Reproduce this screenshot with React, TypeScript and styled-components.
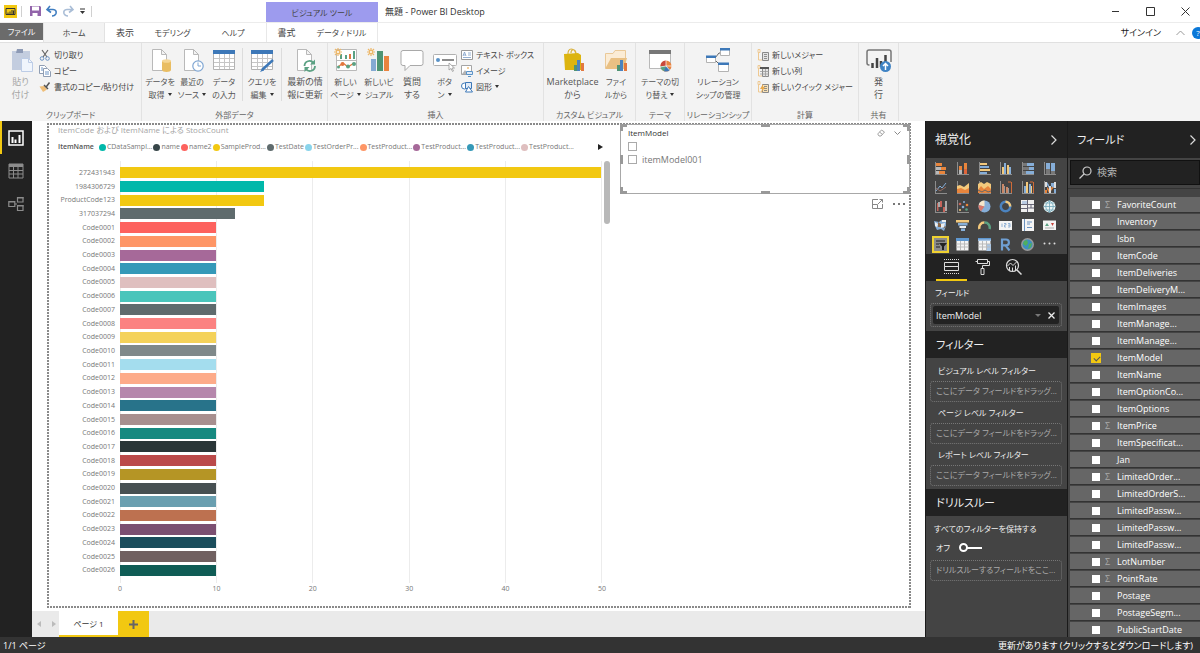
import React from "react";
import styled, { createGlobalStyle, css } from "styled-components";

const GlobalStyle = createGlobalStyle`
  * { box-sizing: border-box; }
  body {
    margin: 0;
    background: #fff;
    color: #444;
    font-family: "Open Sans", "Noto Sans CJK JP", sans-serif;
    font-size: 9px;
    line-height: 13px;
    font-feature-settings: "palt";
  }
  button, input {
    font: inherit;
    font-feature-settings: inherit;
    color: inherit;
    border: 0;
    padding: 0;
    margin: 0;
    background: none;
  }
  svg { display: block; flex: none; }
`;

const Shell = styled.div`
  display: flex;
  flex-direction: column;
  height: 100vh;
  overflow: hidden;
`;

/* ---------- title bar ---------- */
const TitleBar = styled.header`
  display: flex;
  align-items: center;
  flex: none;
  height: 23px;
  padding-left: 4px;
  border-bottom: 1px solid #ececec;
  white-space: nowrap;
`;
const QuickAccess = styled.div`
  display: flex;
  align-items: center;
  gap: 4px;
  width: 262px;
`;
const QuickButton = styled.button`
  display: flex;
`;
const Divider = styled.span`
  width: 1px;
  height: 11px;
  background: #d0d0d0;
`;
const ContextTab = styled.div`
  align-self: stretch;
  width: 112px;
  margin-top: 2px;
  background: #9d9bee;
  text-align: center;
  font-size: 8px;
  line-height: 22px;
`;
const AppTitle = styled.h1`
  flex: 1;
  margin: 0 0 0 7px;
  font-size: 9px;
  font-weight: 400;
  color: #333;
`;
const WindowButtons = styled.div`
  display: flex;
  gap: 5px;
`;
const WindowButton = styled.button`
  display: flex;
  justify-content: center;
  width: 30px;
`;

/* ---------- ribbon tabs ---------- */
const TabRow = styled.nav`
  display: flex;
  flex: none;
  height: 19px;
  white-space: nowrap;
`;
const RibbonTab = styled.button<{ $w: number; $kana?: boolean; $kind?: "file" | "active" }>`
  width: ${(p) => p.$w}px;
  font-size: ${(p) => (p.$kana ? 8 : 9)}px;
  line-height: 18px;
  ${(p) =>
    p.$kind === "file" &&
    css`
      height: 17px;
      background: #6b6b6b;
      color: #fff;
      line-height: 17px;
    `}
  ${(p) =>
    p.$kind === "active" &&
    css`
      background: #f3f3f3;
      border-left: 1px solid #e2e2e2;
      border-right: 1px solid #e2e2e2;
    `}
`;
const ContextTabs = styled.div`
  display: flex;
  width: 112px;
  border-left: 1px solid #e8e8e8;
  border-right: 1px solid #e8e8e8;
`;
const Account = styled.div`
  display: flex;
  align-items: center;
  gap: 15px;
  margin-left: auto;
  margin-right: -4px;
  color: #222;
`;
const HelpBadge = styled.button`
  width: 12px;
  height: 12px;
  margin-left: -8px;
  border-radius: 50%;
  background: #0b78d8;
  color: #fff;
  font-size: 8px;
  line-height: 12px;
`;

/* ---------- ribbon ---------- */
const Ribbon = styled.section`
  display: flex;
  flex: none;
  height: 79px;
  background: #f3f3f3;
  border-top: 1px solid #e0e0e0;
  white-space: nowrap;
`;
const Group = styled.div<{ $w: number }>`
  display: flex;
  flex-direction: column;
  justify-content: space-between;
  flex: none;
  width: ${(p) => p.$w}px;
  padding-top: 5px;
  border-right: 1px solid #e2e2e2;
`;
const GroupBody = styled.div<{ $pad?: number }>`
  display: flex;
  justify-content: ${(p) => (p.$pad === undefined ? "center" : "flex-start")};
  padding-left: ${(p) => p.$pad || 0}px;
`;
const GroupLabel = styled.div`
  display: flex;
  justify-content: center;
  color: #666;
  font-size: 8px;
`;
const BigButton = styled.button<{ $w: number; $off?: boolean; $kana?: boolean }>`
  display: flex;
  flex-direction: column;
  align-items: center;
  gap: 3px;
  width: ${(p) => p.$w}px;
  font-size: ${(p) => (p.$kana ? 8 : 9)}px;
  color: ${(p) => (p.$off ? "#a6a6a6" : "#555")};
`;
const InnerRule = styled.span`
  width: 1px;
  margin: 0 2px;
  background: #dcdcdc;
`;
const SmallList = styled.div`
  display: flex;
  flex-direction: column;
  gap: 3px;
`;
const SmallButton = styled.button`
  display: flex;
  align-items: center;
  gap: 3px;
  height: 13px;
  font-size: 8px;
  color: #444;
`;
const Caret = styled.span`
  display: inline-block;
  margin-left: 3px;
  vertical-align: 2px;
  border: 2px solid transparent;
  border-top: 3px solid #333;
  border-bottom: 0;
`;

/* ---------- workspace ---------- */
const Workspace = styled.main`
  display: flex;
  flex: 1;
  min-height: 0;
`;
const ViewRail = styled.nav`
  display: flex;
  flex-direction: column;
  flex: none;
  width: 32px;
  background: #222;
`;
const ViewButton = styled.button<{ $on?: boolean }>`
  display: flex;
  align-items: center;
  justify-content: center;
  height: 33px;
  border-left: 2px solid ${(p) => (p.$on ? "#f2c811" : "transparent")};
  padding-right: 2px;
`;
const Center = styled.div`
  display: flex;
  flex-direction: column;
  flex: 1;
  min-width: 0;
  padding-top: 2px;
`;
const dots = (dir: string) => `repeating-linear-gradient(${dir}, #8a8a8a 0 2px, transparent 2px 3px)`;
const Page = styled.div`
  display: flex;
  flex: 1;
  min-height: 0;
  margin: 0 14px 3px 15px;
  padding: 1px 1px 2px 2px;
  background:
    ${dots("90deg")} top / 100% 2px no-repeat,
    ${dots("90deg")} bottom / 100% 2px no-repeat,
    ${dots("180deg")} left / 2px 100% no-repeat,
    ${dots("180deg")} right / 2px 100% no-repeat;
`;
const Chart = styled.section`
  display: flex;
  flex-direction: column;
  flex: 1;
  min-width: 0;
  padding: 0 10px 10px 9px;
  font-size: 7px;
  line-height: 12px;
  color: #777;
`;
const ChartTitle = styled.h2`
  margin: 0;
  font-size: 8px;
  font-weight: 400;
  line-height: 12px;
  color: #a5a5a5;
`;
const Legend = styled.div`
  display: flex;
  align-items: center;
  gap: 1px;
  margin: 5px 7px 8px 0;
  white-space: nowrap;
`;
const LegendTitle = styled.strong`
  margin-right: 4px;
  font-weight: 600;
  color: #555;
`;
const LegendItem = styled.span<{ $c: string }>`
  display: flex;
  align-items: center;
  gap: 1px;
  &::before {
    content: "";
    width: 7px;
    height: 7px;
    border-radius: 50%;
    background: ${(p) => p.$c};
  }
`;
const LegendNext = styled.button`
  margin-left: auto;
  border: 3px solid transparent;
  border-left: 5px solid #222;
  border-right: 0;
`;
const PlotArea = styled.div`
  display: grid;
  grid-template-columns: 57px 1fr 6px;
  grid-template-rows: 1fr 13px;
  flex: 1;
  min-height: 0;
`;
const Categories = styled.div`
  display: flex;
  flex-direction: column;
  padding: 5px 0 6px;
`;
const Category = styled.div`
  display: flex;
  align-items: center;
  justify-content: flex-end;
  flex: 1;
  min-height: 0;
`;
const GridLines = styled.div`
  grid-area: 1 / 2;
  display: flex;
  margin: 0 2px 0 5px;
  border-right: 1px solid #ececec;
`;
const GridCell = styled.div`
  flex: 1;
  border-left: 1px solid #ececec;
`;
const Bars = styled.div`
  grid-area: 1 / 2;
  display: flex;
  flex-direction: column;
  margin: 0 3px 0 5px;
  padding: 5px 0 6px;
`;
const BarSlot = styled.div`
  display: flex;
  align-items: center;
  flex: 1;
  min-height: 0;
`;
const Bar = styled.div<{ $c: string }>`
  height: 11px;
  background: ${(p) => p.$c};
`;
const Axis = styled.div`
  grid-column: 2;
  display: flex;
  justify-content: space-between;
  margin: 0 -3px 0 0;
`;
const Tick = styled.span`
  width: 10px;
  text-align: center;
`;
const ScrollThumb = styled.div`
  grid-area: 1 / 3;
  width: 6px;
  height: 63px;
  border-radius: 3px;
  background: #b8b8b8;
`;

/* ---------- slicer ---------- */
const SlicerColumn = styled.div`
  flex: none;
  width: 290px;
`;
const Slicer = styled.section`
  position: relative;
  height: 70px;
  padding: 2px 8px 2px 7px;
  border: 1px solid #a8a8a8;
  background: #fff;
`;
const Handle = styled.i<{ $x: "l" | "c" | "r"; $y: "t" | "m" | "b" }>`
  position: absolute;
  width: ${(p) => (p.$x === "c" ? 9 : p.$y === "m" ? 3 : 7)}px;
  height: ${(p) => (p.$y === "m" ? 9 : p.$x === "c" ? 3 : 7)}px;
  ${(p) => (p.$x === "l" ? "left: -1px;" : p.$x === "r" ? "right: -1px;" : "left: calc(50% - 4px);")}
  ${(p) => (p.$y === "t" ? "top: -1px;" : p.$y === "b" ? "bottom: -1px;" : "top: calc(50% - 4px);")}
  ${(p) =>
    p.$x !== "c" && p.$y !== "m"
      ? `border: 0 solid #999;
         border-${p.$x === "l" ? "left" : "right"}-width: 3px;
         border-${p.$y === "t" ? "top" : "bottom"}-width: 3px;`
      : "background: #999;"}
`;
const SlicerHead = styled.div`
  display: flex;
  align-items: center;
  gap: 9px;
  font-size: 8px;
  line-height: 12px;
  color: #333;
`;
const SlicerName = styled.span`
  flex: 1;
`;
const SlicerItem = styled.label`
  display: flex;
  align-items: center;
  gap: 5px;
  height: 13px;
  color: #777;
`;
const SlicerOptions = styled.div`
  padding-top: 1px;
`;
const OpenBox = styled.input`
  appearance: none;
  width: 9px;
  height: 9px;
  border: 1px solid #aaa;
`;
const SlicerTools = styled.div`
  display: flex;
  align-items: center;
  justify-content: flex-end;
  gap: 10px;
  padding: 5px 5px 0 0;
`;

/* ---------- page tabs ---------- */
const PageTabs = styled.nav`
  display: flex;
  flex: none;
  height: 26px;
  background: #eaeaea;
`;
const PageArrows = styled.div`
  display: flex;
  align-items: center;
  justify-content: space-between;
  width: 27px;
  padding: 0 3px 0 5px;
`;
const PageTab = styled.button`
  width: 59px;
  background: #fff;
  border-bottom: 2px solid #f2c811;
  font-size: 8px;
  color: #333;
`;
const AddPage = styled.button`
  display: flex;
  align-items: center;
  justify-content: center;
  width: 31px;
  background: #f2c811;
`;

/* ---------- right panes ---------- */
const Pane = styled.aside<{ $w: number }>`
  display: flex;
  flex-direction: column;
  flex: none;
  width: ${(p) => p.$w}px;
  border-left: 1px solid #1a1a1a;
  background: #444;
  color: #f0f0f0;
  white-space: nowrap;
  overflow: hidden;
`;
const PaneHead = styled.div<{ $end: number }>`
  display: flex;
  align-items: center;
  justify-content: space-between;
  flex: none;
  height: 37px;
  padding: 0 ${(p) => p.$end}px 0 9px;
  background: #222;
`;
const PaneTitle = styled.h2<{ $kana?: boolean }>`
  margin: 0;
  font-size: ${(p) => (p.$kana ? 11 : 12)}px;
  font-weight: 400;
  line-height: 18px;
`;
const VisualGrid = styled.div`
  display: grid;
  grid-template-columns: repeat(6, 1fr);
  grid-auto-rows: 18px;
  row-gap: 1px;
  flex: none;
  padding: 2px 7px 0 4px;
`;
const VisualButton = styled.button<{ $on?: boolean }>`
  display: flex;
  align-items: center;
  justify-content: center;
  width: 17px;
  height: 17px;
  justify-self: center;
  outline: ${(p) => (p.$on ? "2px solid #f0d232" : "none")};
  outline-offset: -2px;
`;
const FormatTabs = styled.div`
  display: flex;
  flex: none;
  height: 27px;
  padding-left: 10px;
  background: #222;
`;
const FormatTab = styled.button<{ $on?: boolean }>`
  display: flex;
  align-items: center;
  justify-content: center;
  width: 31px;
  border-bottom: 2px solid ${(p) => (p.$on ? "#f2c811" : "transparent")};
`;
const Well = styled.div`
  display: flex;
  flex-direction: column;
  gap: 4px;
  padding: 5px 5px 4px 4px;
`;
const WellLabel = styled.div<{ $indent?: number }>`
  padding-left: ${(p) => p.$indent || 5}px;
  font-size: 8px;
`;
const DropZone = styled.div`
  height: 21px;
  padding: 0 5px;
  border: 1px dotted #777;
  border-radius: 3px;
  font-size: 8px;
  line-height: 18px;
  color: #aaa;
`;
const FieldZone = styled.div`
  padding: 2px;
  border: 1px dotted #777;
  border-radius: 3px;
`;
const FieldChip = styled.div`
  display: flex;
  align-items: center;
  gap: 6px;
  height: 18px;
  padding: 0 3px;
  border-radius: 2px;
  background: #222;
`;
const ChipName = styled.span`
  flex: 1;
`;
const ChipCaret = styled.button`
  border: 3px solid transparent;
  border-top: 3px solid #777;
  border-bottom: 0;
`;
const SectionHead = styled.h3`
  flex: none;
  height: 27px;
  margin: 0;
  padding-left: 10px;
  background: #222;
  font-size: 11px;
  font-weight: 400;
  line-height: 28px;
`;
const FilterList = styled.div`
  display: flex;
  flex-direction: column;
  gap: 4px;
  padding: 6px 5px 3px 4px;
`;
const KeepFilters = styled.label`
  display: flex;
  align-items: center;
  gap: 9px;
  padding: 2px 6px;
  font-size: 8px;
`;
const Switch = styled.input`
  appearance: none;
  position: relative;
  width: 23px;
  height: 9px;
  background: linear-gradient(#fff, #fff) right center / 15px 2px no-repeat;
  &::before {
    content: "";
    display: block;
    box-sizing: border-box;
    width: 9px;
    height: 9px;
    border: 2px solid #fff;
    border-radius: 50%;
  }
`;
const SearchBox = styled.label`
  display: flex;
  align-items: center;
  gap: 5px;
  flex: none;
  height: 25px;
  margin: 2px 0 0 2px;
  padding-left: 8px;
  border: 1px solid #111;
  background: #222;
`;
const SearchInput = styled.input`
  flex: 1;
  min-width: 0;
  font-size: 10px;
  &::placeholder {
    color: #b5b5b5;
    opacity: 1;
  }
`;
const FieldList = styled.div`
  display: flex;
  flex-direction: column;
  gap: 2px;
  margin-top: 3px;
  padding: 8px 0 0 2px;
  border-top: 1px solid #333;
`;
const FieldRow = styled.label`
  display: flex;
  align-items: center;
  flex: none;
  height: 15px;
  padding-left: 21px;
  background: #666;
  box-shadow: 0 1px 0 #333;
  color: #fff;
`;
const FieldCheck = styled.input`
  appearance: none;
  width: 8px;
  height: 8px;
  margin: 0 1px;
  background: #fff;
  &:checked {
    width: 10px;
    height: 10px;
    margin: 0;
    background: #f2c811;
  }
  &:checked::before {
    content: "";
    display: block;
    width: 5px;
    height: 3px;
    margin: 3px 0 0 3px;
    border: solid #555;
    border-width: 0 0 1px 1px;
    transform: rotate(-45deg);
  }
`;
const Sigma = styled.span`
  width: 16px;
  padding-left: 4px;
  color: #aaa;
`;

const StatusBar = styled.footer`
  display: flex;
  justify-content: space-between;
  flex: none;
  height: 16px;
  padding-left: 3px;
  background: #333;
  color: #fff;
  line-height: 17px;
  white-space: nowrap;
`;
const UpdateLink = styled.a`
  width: 202px;
  color: inherit;
  text-decoration: none;
`;

/* ---------- icons ---------- */
type IconProps = { s?: number; w?: number; h?: number; children: React.ReactNode };
const Icon = ({ s = 24, w, h, children }: IconProps) => (
  <svg width={w || s} height={h || s} viewBox={`0 0 ${w || s} ${h || s}`} fill="none" aria-hidden="true">
    {children}
  </svg>
);
const Sheet = () => <path d="M4.500 1.500h9l5 5v16h-14zM13.500 1.500v5h5" fill="#fff" stroke="#b9b9b9" />;
const Spark = () => (
  <g stroke="#edb86a" strokeWidth="1.2">
    <path d="M4 0v8M0 4h8M1 1l6 6M7 1l-6 6" />
    <circle cx="4" cy="4" r="1.6" fill="#fff" />
  </g>
);

const PasteIcon = () => (
  <Icon>
    <path d="M3 3h18v19H3z" fill="#c3cddf" />
    <path d="M8 1h6v4H7z" fill="#8d9ab5" />
    <path d="M12.500 10.500h7l4 4v9h-11z" fill="#f0f5fc" stroke="#bccce6" />
    <path d="M19.500 10.500v4h4" stroke="#bccce6" />
  </Icon>
);
const CutIcon = () => (
  <Icon s={12}>
    <path d="M3 1l5 7M9 1L4 8" stroke="#666" strokeWidth="1.200" />
    <circle cx="3" cy="9.500" r="1.800" stroke="#6d94c4" />
    <circle cx="8.500" cy="9.500" r="1.800" stroke="#6d94c4" />
  </Icon>
);
const CopyIcon = () => (
  <Icon s={12}>
    <path d="M.5.5h5l2 2v6h-7z" fill="#fff" stroke="#8f9db3" />
    <path d="M4.500 3.500h4l3 3v5h-7z" fill="#fff" stroke="#8f9db3" />
    <path d="M6 7h4M6 9h4M2 3h2M2 5h2" stroke="#6d94c4" />
  </Icon>
);
const BrushIcon = () => (
  <Icon s={12}>
    <path d="M.5 5.500l5-.5 2.500 3.500-4 2.500z" fill="#efbe78" />
    <path d="M5 4l4 4M7.500 5.500l3-4" stroke="#555" strokeWidth="1.500" />
  </Icon>
);
const GetDataIcon = () => (
  <Icon>
    <Sheet />
    <path d="M14 13v9c0 2.500 9 2.500 9 0v-9z" fill="#e9bd62" />
    <ellipse cx="18.500" cy="13" rx="4.500" ry="1.800" fill="#f5d695" />
  </Icon>
);
const RecentIcon = () => (
  <Icon>
    <Sheet />
    <circle cx="18" cy="18" r="5.200" fill="#fff" stroke="#7fa6d3" strokeWidth="1.200" />
    <path d="M18 14.500V18h3" stroke="#7fa6d3" />
  </Icon>
);
const TableBase = () => (
  <>
    <path d="M1.500 2.500h21v19h-21z" fill="#fff" stroke="#b3b3b3" />
    <path d="M1 2h22v4H1z" fill="#3d78b8" />
    <path d="M2 10.500h20M2 14.500h20M2 18.500h20M7.500 6v15M12.500 6v15M17.500 6v15" stroke="#c6c6c6" />
  </>
);
const EnterDataIcon = () => <Icon><TableBase /></Icon>;
const QueryIcon = () => (
  <Icon>
    <TableBase />
    <path d="M23 12l-11 10" stroke="#3d78b8" strokeWidth="2.500" />
    <path d="M12.500 20l-2.500 4 4-1.500z" fill="#3d78b8" />
  </Icon>
);
const RefreshIcon = () => (
  <Icon>
    <Sheet />
    <path d="M11.500 18a5 5 0 019-3M22 18a5 5 0 01-9 3" stroke="#5ba183" strokeWidth="1.800" />
    <path d="M22 11.500v5h-5zM11.500 24v-5h5z" fill="#5ba183" />
  </Icon>
);
const NewPageIcon = () => (
  <Icon>
    <path d="M2.500 1.500h20v21h-20z" fill="#fff" stroke="#b9b9b9" />
    <path d="M7 6v5M12 7v4M20 3v8" stroke="#5ba183" strokeWidth="2" />
    <path d="M16 6v5" stroke="#e3783f" strokeWidth="2" />
    <path d="M2 12.500h21" stroke="#b9b9b9" />
    <path d="M4 19l5-4 5 4 6-4" stroke="#e3783f" strokeWidth="1.300" />
    <circle cx="8.500" cy="16" r="2" fill="#e3783f" />
    <circle cx="4.500" cy="19" r="1.500" fill="#5ba183" />
    <circle cx="14" cy="18.500" r="2" fill="#5ba183" />
    <circle cx="20" cy="16" r="2" fill="#5ba183" />
    <Spark />
  </Icon>
);
const NewVisualIcon = () => (
  <Icon>
    <path d="M4 11h5v12H4z" fill="#84a9d3" />
    <path d="M10 3h6v20h-6z" fill="#4f9474" />
    <path d="M17 8h5v15h-5z" fill="#ea8440" />
    <Spark />
  </Icon>
);
const QuestionIcon = () => (
  <Icon>
    <path d="M3 2.500h18q2 0 2 2v11q0 2-2 2H10l-5 5v-5H3q-2 0-2-2v-11q0-2 2-2z" fill="#fff" stroke="#a9a9a9" />
  </Icon>
);
const ButtonIcon = () => (
  <Icon>
    <rect x=".5" y="6.500" width="23" height="11" rx="1" fill="#fff" stroke="#b0b0b0" />
    <circle cx="5" cy="12" r="2" fill="#5a93c8" />
    <path d="M9 12h12" stroke="#666" strokeWidth="1.500" />
    <path d="M16 15v7l2-1.500 1.500 3 1-.5-1.500-3h2.500z" fill="#fff" stroke="#999" strokeWidth=".8" />
  </Icon>
);
const TextBoxIcon = () => (
  <Icon s={12}>
    <path d="M.5 1.500h11v9H.5z" fill="#fff" stroke="#999" />
    <path d="M2 7l1.500-4L5 7M2.500 6h2M7 4h3M7 6h3M2 8.500h8" stroke="#7a9cc6" strokeWidth=".8" />
  </Icon>
);
const ImageIcon = () => (
  <Icon s={12}>
    <path d="M.5.5h10v9H.5z" fill="#fff" stroke="#a5a5a5" />
    <circle cx="7" cy="3" r="1" fill="#efbe78" />
    <path d="M1 9l3-4 3 4z" fill="#b5b5b5" />
    <path d="M5.500 6.500h6v3h-6zM7 11.500h3" fill="#dfeaf7" stroke="#5a93c8" />
  </Icon>
);
const ShapesIcon = () => (
  <Icon s={12}>
    <circle cx="3.500" cy="5" r="3" fill="#fff" stroke="#3d78b8" />
    <path d="M4.500 1.500h6v6h-6z" fill="#dfeaf7" stroke="#3d78b8" />
    <path d="M7.500 5.500l4 5.500h-7z" fill="#fff" stroke="#3d78b8" />
  </Icon>
);
const MiniBars = () => (
  <>
    <path d="M13 17h3v6h-3z" fill="#4f9474" />
    <path d="M16 12h3v11h-3z" fill="#4b83bf" />
    <path d="M20 15h3v8h-3z" fill="#e3783f" />
  </>
);
const MarketIcon = () => (
  <Icon>
    <path d="M7 7c-1-8 7-8 8 0M10 5c0-5 5-4 5 1" stroke="#d9b13b" strokeWidth="1.200" />
    <path d="M3 6l14-1 3 2v15H4z" fill="#dcb40f" />
    <MiniBars />
  </Icon>
);
const FileIcon = () => (
  <Icon>
    <path d="M1.500 20V5.500H9l2-3h10.500V20" fill="#fbecd5" stroke="#eac998" />
    <path d="M1 21L7 10h16l-3 11z" fill="#e9c083" />
    <MiniBars />
  </Icon>
);
const ThemeIcon = () => (
  <Icon>
    <path d="M1.500 2.500h21v18h-21z" fill="#fff" stroke="#b9b9b9" />
    <path d="M1 2h22v4H1z" fill="#777" />
    <circle cx="18" cy="18" r="5.500" fill="#ea8440" />
    <path d="M18 18v-5.500a5.500 5.500 0 00-5.500 5.500z" fill="#c9473b" />
    <path d="M18 18h-5.500a5.500 5.500 0 004 5.300z" fill="#5ba183" />
    <path d="M18 18l-2 5.200a5.500 5.500 0 006-1.500z" fill="#3d78b8" />
    <path d="M18 12v6h6M18 18l-6 1M18 18l3.500 4" stroke="#fff" strokeWidth=".7" />
  </Icon>
);
const RelationIcon = () => (
  <Icon>
    <path d="M9 10l4-5h3M9 12l4 4" stroke="#666" />
    <path d="M.5 8.500h9v6h-9zM14.500.5h9v7h-9zM12.500 15.500h10v8h-10z" fill="#fff" stroke="#b3b3b3" />
    <path d="M0 7.500h10v2.500H0zM14 0h10v2.500H14zM12 14.500h11V17H12z" fill="#3d78b8" />
  </Icon>
);
const MeasureIcon = ({ k }: { k: number }) => (
  <Icon s={12}>
    <path d="M1 .5h2v3H1zM1.500 4v7H5" stroke="#efc992" />
    <path
      d="M5.500 3.500h6v8h-6z"
      fill={k === 2 ? "#f6dfb5" : "#e4e4e4"}
      stroke="#8a8a8a"
    />
    {k === 1 ? (
      <>
        <path d="M3 2h9v2H3z" fill="#555" />
        <path d="M3 6.500h9M3 9h9M8.500 4v8" stroke="#999" strokeWidth=".8" />
      </>
    ) : (
      <path d="M7 5.500h3M7 7.500h3M7 9.500h3" stroke="#777" strokeWidth=".8" />
    )}
    {k === 2 && <path d="M6 3l-3 5h2l-1 4 4-6H6z" fill="#eaa94a" />}
  </Icon>
);
const PublishIcon = () => (
  <Icon w={26} h={24}>
    <path d="M3.500 17H3q-2 0-2-2V4q0-2 2-2h20q2 0 2 2v10" stroke="#777" strokeWidth="1.500" />
    <path d="M6.500 15v5M11 10v10M15 13v6M19.500 7v8" stroke="#444" strokeWidth="2.500" />
    <circle cx="19.500" cy="18.500" r="5.500" fill="#3f83c4" />
    <path d="M19.500 22v-6M17 18l2.500-2.500L22 18" stroke="#fff" strokeWidth="1.500" />
  </Icon>
);

const ReportView = () => (
  <Icon s={16}>
    <path d="M1 1h14v14H1z" stroke="#fff" strokeWidth="1.500" />
    <path d="M4.500 13V7M7.500 13V9.500M11.500 13V5" stroke="#fff" strokeWidth="2" />
  </Icon>
);
const DataView = () => (
  <Icon s={16}>
    <path d="M1 1h14v14H1zM1 7.500h14M1 11h14M5.500 4v11M10 4v11" stroke="#8c8c8c" />
    <path d="M1 1h14v3H1z" fill="#8c8c8c" />
  </Icon>
);
const ModelView = () => (
  <Icon s={16}>
    <path d="M.8 5.500h6v5h-6zM9.500 1.500h5.500v4.500H9.500zM9.500 9.500h5.500v5H9.500zM7 8h2" stroke="#8c8c8c" strokeWidth="1.200" />
    <path d="M1 5h6v1.500H1zM9 1h6.500v1.500H9zM9 9h6.500v1.500H9z" fill="#8c8c8c" />
  </Icon>
);

const O = "#e8853c";
const B = "#86aed8";
const Y = "#f3c97c";
const axes = <path d="M1.500 0v12.500M1 12.500h12" stroke="#8d8d8d" />;
const visuals: { name: string; art: React.ReactNode }[] = [
  { name: "積み上げ横棒", art: <>{axes}<path d="M2 1h6v3H2zM7 5h5v3H7zM5 9h6v3H5z" fill={O} /><path d="M2 5h5v3H2zM2 9h3v3H2z" fill="#b9b9b9" /></> },
  { name: "積み上げ縦棒", art: <>{axes}<path d="M3 4h3v4H3zM8 1h3v6H8z" fill={O} /><path d="M3 8h3v4H3z" fill="#b9b9b9" /><path d="M8 7h3v5H8z" fill="#e0653a" /></> },
  { name: "集合横棒", art: <>{axes}<path d="M2 1h7v2H2zM2 7h10v2H2z" fill={Y} /><path d="M2 4h9v2H2zM2 10h7v2H2z" fill={B} /></> },
  { name: "集合縦棒", art: <>{axes}<path d="M3 5h2v7H3zM8 3h2v9H8z" fill={Y} /><path d="M5 1h2v11H5zM10 5h2v7h-2z" fill={B} /></> },
  { name: "100% 横棒", art: <>{axes}<path d="M2 1h4v3H2zM2 5h6v3H2zM2 9h3v3H2z" fill="#777" /><path d="M6 1h7v3H6zM8 5h5v3H8zM5 9h8v3H5z" fill={B} /></> },
  { name: "100% 縦棒", art: <>{axes}<path d="M3 1h4v6H3zM8 1h4v8H8z" fill={B} /><path d="M3 7h4v5H3zM8 9h4v3H8z" fill="#777" /></> },
  { name: "折れ線", art: <>{axes}<path d="M2 10l4-5 2 2 4-5" stroke={B} /><path d="M2 7l4 3 6-4" stroke="#996f62" /></> },
  { name: "面", art: <>{axes}<path d="M1 5l3-1 4 2 5-4v10H1z" fill={Y} /><path d="M1 8l4-1 4 2 4-2v5H1z" fill={O} /></> },
  { name: "積み上げ面", art: <>{axes}<path d="M0 3l3-2 3 2 3-2 4 2v9H0z" fill={Y} /><path d="M0 9l3-4 3 3 4-3 3 3v4H0z" fill={O} /><path d="M0 9l4 2 3-2 3 2 3-1" stroke="#666" /></> },
  { name: "複合 1", art: <>{axes}<path d="M3 3h2v9H3zM7 6h2v6H7z" fill="#c98767" /><path d="M5 5h1v7H5zM9 7h1v5H9z" fill="#999" /><path d="M12.500 1v11M9 1h3" stroke="#d06b38" /></> },
  { name: "複合 2", art: <>{axes}<path d="M3 5h2v7H3zM8 3h2v9H8z" fill={B} /><path d="M5 1h2v11H5zM10 5h1v7h-1z" fill={Y} /><path d="M12.500 1v11M9 1h3" stroke="#d06b38" /></> },
  { name: "リボン", art: <>{axes}<path d="M2 1h2v5H2zM6 5h2v7H6zM11 1h2v6h-2z" fill="#ddd" /><path d="M4 6l2 2v4l-2-4zM8 7l3-4v3l-3 4zM2 9h2v3H2z" fill={O} /><path d="M4 1l2 3v3L4 4zM8 2h3v5L8 5zM11 8h2v4h-2z" fill={B} /></> },
  { name: "ウォーターフォール", art: <>{axes}<path d="M3 3h1.500v8H3zM6 1h2v6H6zM9 7h2v5H9z" fill="#c5645b" /><path d="M4 2h2v5H4zM11 1h2v10h-2z" fill="#aaa" /></> },
  { name: "散布図", art: <>{axes}<circle cx="4" cy="4" r="1.300" fill="#c5645b" /><circle cx="8" cy="2" r="1" fill={B} /><circle cx="11" cy="5" r="1.300" fill={O} /><circle cx="7" cy="7" r="1.300" fill={B} /><circle cx="4" cy="10" r="1" fill={Y} /><circle cx="10.500" cy="9.500" r="1.300" fill="#5ba183" /></> },
  { name: "円", art: <><circle cx="6.500" cy="6.500" r="6" fill={B} /><path d="M6.500 6.500V.5A6 6 0 00.7 5z" fill="#f7e6c9" /><path d="M6.500 6.500L.7 5A6 6 0 003 11.300z" fill="#d9786a" /></> },
  { name: "ドーナツ", art: <><circle cx="6.500" cy="6.500" r="4.700" stroke="#4b83bf" strokeWidth="2.500" /><path d="M6.500 1.800a4.700 4.700 0 014.700 4.700" stroke={Y} strokeWidth="2.500" /></> },
  { name: "ツリーマップ", art: <><path d="M0 0h13v12H0z" fill="#eee" /><path d="M0 4.500h13M6.500 0v12M6.500 8h6.500M10 4.500V8M0 8.500h6" stroke="#667" /><path d="M1 1h5v3H1z" fill="#b8cbe3" /></> },
  { name: "マップ", art: <><circle cx="6.500" cy="6.500" r="6" fill="#e9f4f4" /><path d="M.5 6.500h12M2 3h9M2 10h9M6.500.5v12M6.500.5c-5 4-5 8 0 12M6.500.5c5 4 5 8 0 12" stroke="#6fa5b8" strokeWidth=".8" /></> },
  { name: "塗り分け地図", art: <><path d="M0 2l5 1 3-2 4 1v5l-2 5-3-2-4 1-2-4z" fill={B} /><path d="M1 3l3 2-1 3-2-1zM7 5l4-1-1 4-3 1zM8 1h4v2H8z" fill="#eee" /><path d="M4 3l3 2v3H4zM9 10l2-3 1 1z" fill="#8a6748" /></> },
  { name: "じょうご", art: <><path d="M0 1h13v2.500H0z" fill={Y} /><path d="M2 4h9.500v2.500H2z" fill={B} /><path d="M3.500 7H10v2H3.500z" fill="#eee" /><path d="M5 9.500h4V12H5z" fill={B} /></> },
  { name: "ゲージ", art: <><path d="M1.500 10a5 5 0 015-6.500" stroke={Y} strokeWidth="2.500" /><path d="M6.500 3.500a5 5 0 015 6.500" stroke="#5ba183" strokeWidth="2.500" /></> },
  { name: "カード", art: <><path d="M0 2h13v9H0z" fill="#f4f4f4" /><path d="M3 4.500v3.500M5 4.500h2v1.500H5.500V8H7M9 4.500h2V8H9M9 6.200h2" stroke="#7ba3cf" strokeWidth=".8" /></> },
  { name: "複数行カード", art: <><path d="M1 0h12v12H1z" fill="#f4f4f4" /><path d="M3.500 0v12M6 3h5M6 5h3M6 8.500h5" stroke="#6a92c0" /></> },
  { name: "KPI", art: <><path d="M0 1.500h13v9.500H0z" fill="#f4f4f4" /><path d="M2 7l2-3 2 3z" fill="#5ba183" /><path d="M8 4h3l-1.500 3z" fill="#c5423b" /><path d="M2 9h9" stroke="#aaa" /></> },
  { name: "スライサー", art: <><path d="M0 0h13v13H0z" fill="#8c8c8c" /><path d="M2 3h9M2 6h3M2 9h4" stroke="#444" strokeWidth="1.500" /><path d="M5 5h8l-3 3.500V12H8V8.500z" fill="#222" /></> },
  { name: "テーブル", art: <><path d="M.5.5h12v12H.5z" fill="#f4f4f4" /><path d="M0 0h13v3H0z" fill="#5f97cf" /><path d="M.5 6h12M.5 9h12M4.500 3v9M8.500 3v9" stroke="#bbb" /></> },
  { name: "マトリックス", art: <><path d="M.5.5h12v12H.5z" fill="#f4f4f4" /><path d="M0 0h13v3H0zM8.500 6H13v7H8.500z" fill="#a9c6e5" /><path d="M0 0h13v1.500H0z" fill="#5f97cf" /><path d="M.5 6h12M.5 9h12M4.500 3v9M8.500 3v9" stroke="#bbb" /></> },
  { name: "R スクリプト", art: <path d="M3 12.500V1.500h4a2.800 2.800 0 010 5.800H3M6.500 7.300l4 5.200" stroke="#6f9fd3" strokeWidth="2.200" /> },
  { name: "ArcGIS", art: <><circle cx="6.500" cy="6.500" r="6.500" fill="#9a9a9a" /><circle cx="6.500" cy="6.500" r="5" fill="#3c8fc0" /><path d="M3 3l3-1 1 3-2 3-3-2zM8 6l3-1-1 4-3 2z" fill="#4fae5e" /></> },
  { name: "その他", art: <><circle cx="1.500" cy="5.500" r="1" fill="#ddd" /><circle cx="6.500" cy="5.500" r="1" fill="#ddd" /><circle cx="11.500" cy="5.500" r="1" fill="#ddd" /></> },
];

/* ---------- data ---------- */
const chartData: [string, number, string][] = [
  ["272431943", 50, "#f2c811"],
  ["1984306729", 15, "#01b8aa"],
  ["ProductCode123", 15, "#f2c811"],
  ["317037294", 12, "#5f6b6d"],
  ...(
    [
      "#fd625e", "#fe9666", "#a66999", "#3599b8", "#dfbfbf", "#4ac5bb", "#5f6b6d", "#fb8281", "#f4d25a",
      "#7f898a", "#a4ddee", "#fdab89", "#b687ac", "#28738a", "#a78f8f", "#168980", "#293537", "#bb4a4a",
      "#b59525", "#475052", "#6a9fb0", "#bd7150", "#7b4f71", "#1b4d5c", "#706060", "#0f5c55",
    ].map((c, i) => [`Code00${String(i + 1).padStart(2, "0")}`, 10, c]) as [string, number, string][]
  ),
];
const legend: [string, string][] = [
  ["CDataSampl...", "#01b8aa"],
  ["name", "#374649"],
  ["name2", "#fd625e"],
  ["SampleProd...", "#f2c811"],
  ["TestDate", "#5f6b6d"],
  ["TestOrderPr...", "#8ad4eb"],
  ["TestProduct...", "#fe9666"],
  ["TestProduct...", "#a66999"],
  ["TestProduct...", "#3599b8"],
  ["TestProduct...", "#dfbfbf"],
];
const fields = [
  "ΣFavoriteCount", "Inventory", "Isbn", "ItemCode", "ItemDeliveries", "ItemDeliveryM...", "ItemImages",
  "ItemManage...", "ItemManage...", "ItemModel", "ItemName", "ItemOptionCo...", "ItemOptions", "ΣItemPrice",
  "ItemSpecificat...", "Jan", "ΣLimitedOrder...", "LimitedOrderS...", "LimitedPassw...", "LimitedPassw...",
  "LimitedPassw...", "ΣLotNumber", "ΣPointRate", "Postage", "PostageSegm...", "PublicStartDate",
];

const Chevron = () => (
  <Icon w={8} h={12}><path d="M1.500 1.500L6 6l-4.500 4.500" stroke="#ddd" strokeWidth="1.200" /></Icon>
);

type BigProps = { w: number; icon: React.ReactNode; a: string; b: string; menu?: boolean; off?: boolean; kana?: boolean };
const Big = ({ w, icon, a, b, menu, off, kana }: BigProps) => (
  <BigButton $w={w} $off={off} $kana={kana}>
    {icon}
    <span>
      {a}
      <br />
      {b}
      {menu && <Caret />}
    </span>
  </BigButton>
);

const TopBar = () => (
  <TitleBar>
    <QuickAccess>
      <Icon w={13} h={13}>
        <path d="M0 0h13v13H0z" fill="#f2c811" />
        <path d="M2 3.500h9v6H2z" stroke="#333" />
        <path d="M4 9V7.500M6 9V6.500M8 9V5M9.500 9V5.500" stroke="#333" />
      </Icon>
      <Divider />
      <QuickButton aria-label="保存">
        <Icon w={15} h={12}>
          <path d="M4 1h10l1 1v9H4z" fill="#9264aa" />
          <path d="M6 1.500h7v4H6zM6.500 8h5v3h-5z" fill="#fff" />
        </Icon>
      </QuickButton>
      <QuickButton aria-label="元に戻す">
        <Icon w={13} h={12}><path d="M5 1L2 4.500 6 7.500M2 4.500h6q4 .5 3 4-1 2.500-4 2.500" stroke="#3f7dc0" strokeWidth="1.600" /></Icon>
      </QuickButton>
      <QuickButton aria-label="やり直し">
        <Icon w={13} h={12}><path d="M8 1l3 3.500L7 7.500M11 4.500H5q-4 .5-3 4 1 2.500 4 2.500" stroke="#a9bdd6" strokeWidth="1.600" /></Icon>
      </QuickButton>
      <QuickButton aria-label="カスタマイズ">
        <Icon w={8} h={8}><path d="M1 2h5" stroke="#333" /><path d="M1 4h5L3.500 7z" fill="#333" /></Icon>
      </QuickButton>
      <Divider />
    </QuickAccess>
    <ContextTab>ビジュアル ツール</ContextTab>
    <AppTitle>無題 - Power BI Desktop</AppTitle>
    <WindowButtons>
      <WindowButton aria-label="最小化"><Icon s={9}><path d="M1 4.500h7" stroke="#333" /></Icon></WindowButton>
      <WindowButton aria-label="最大化"><Icon s={9}><path d="M.5.5h8v8h-8z" stroke="#333" /></Icon></WindowButton>
      <WindowButton aria-label="閉じる"><Icon s={9}><path d="M.5.5l8 8M8.500.5l-8 8" stroke="#333" /></Icon></WindowButton>
    </WindowButtons>
  </TitleBar>
);

const RibbonTabs = () => (
  <TabRow>
    <RibbonTab $w={43} $kana $kind="file">ファイル</RibbonTab>
    <RibbonTab $w={62} $kana $kind="active">ホーム</RibbonTab>
    <RibbonTab $w={40}>表示</RibbonTab>
    <RibbonTab $w={55} $kana>モデリング</RibbonTab>
    <RibbonTab $w={66} $kana>ヘルプ</RibbonTab>
    <ContextTabs>
      <RibbonTab $w={39}>書式</RibbonTab>
      <RibbonTab $w={71} $kana>データ / ドリル</RibbonTab>
    </ContextTabs>
    <Account>
      <button>サインイン</button>
      <Icon w={9} h={6}><path d="M.5 5l4-4 4 4" stroke="#999" /></Icon>
      <HelpBadge>?</HelpBadge>
    </Account>
  </TabRow>
);

const RibbonBar = () => (
  <Ribbon>
    <Group $w={142}>
      <GroupBody $pad={2}>
        <Big w={37} icon={<PasteIcon />} a="貼り" b="付け" off />
        <SmallList>
          <SmallButton><CutIcon />切り取り</SmallButton>
          <SmallButton><CopyIcon />コピー</SmallButton>
          <SmallButton><BrushIcon />書式のコピー/貼り付け</SmallButton>
        </SmallList>
      </GroupBody>
      <GroupLabel>クリップボード</GroupLabel>
    </Group>
    <Group $w={186}>
      <GroupBody $pad={2}>
        <Big w={32} icon={<GetDataIcon />} a="データを" b="取得" menu kana />
        <Big w={32} icon={<RecentIcon />} a="最近の" b="ソース" menu kana />
        <Big w={32} icon={<EnterDataIcon />} a="データ" b="の入力" kana />
        <InnerRule />
        <Big w={34} icon={<QueryIcon />} a="クエリを" b="編集" menu kana />
        <InnerRule />
        <Big w={42} icon={<RefreshIcon />} a="最新の情" b="報に更新" />
      </GroupBody>
      <GroupLabel>外部データ</GroupLabel>
    </Group>
    <Group $w={216}>
      <GroupBody $pad={1}>
        <Big w={33} icon={<NewPageIcon />} a="新しい" b="ページ" menu kana />
        <Big w={34} icon={<NewVisualIcon />} a="新しいビ" b="ジュアル" kana />
        <Big w={32} icon={<QuestionIcon />} a="質問" b="する" />
        <Big w={33} icon={<ButtonIcon />} a="ボタ" b="ン" menu kana />
        <SmallList>
          <SmallButton><TextBoxIcon />テキスト ボックス</SmallButton>
          <SmallButton><ImageIcon />イメージ</SmallButton>
          <SmallButton><ShapesIcon /><span>図形<Caret /></span></SmallButton>
        </SmallList>
      </GroupBody>
      <GroupLabel>挿入</GroupLabel>
    </Group>
    <Group $w={92}>
      <GroupBody $pad={1}>
        <Big w={55} icon={<MarketIcon />} a="Marketplace" b="から" />
        <Big w={32} icon={<FileIcon />} a="ファイ" b="ルから" kana />
      </GroupBody>
      <GroupLabel>カスタム ビジュアル</GroupLabel>
    </Group>
    <Group $w={49}>
      <GroupBody><Big w={48} icon={<ThemeIcon />} a="テーマの切" b="り替え" menu kana /></GroupBody>
      <GroupLabel>テーマ</GroupLabel>
    </Group>
    <Group $w={67}>
      <GroupBody><Big w={66} icon={<RelationIcon />} a="リレーション" b="シップの管理" kana /></GroupBody>
      <GroupLabel>リレーションシップ</GroupLabel>
    </Group>
    <Group $w={107}>
      <GroupBody $pad={5}>
        <SmallList>
          <SmallButton><MeasureIcon k={0} />新しいメジャー</SmallButton>
          <SmallButton><MeasureIcon k={1} />新しい列</SmallButton>
          <SmallButton><MeasureIcon k={2} />新しいクイック メジャー</SmallButton>
        </SmallList>
      </GroupBody>
      <GroupLabel>計算</GroupLabel>
    </Group>
    <Group $w={40}>
      <GroupBody><Big w={38} icon={<PublishIcon />} a="発" b="行" /></GroupBody>
      <GroupLabel>共有</GroupLabel>
    </Group>
  </Ribbon>
);

const StockChart = () => (
  <Chart>
    <ChartTitle>ItemCode および ItemName による StockCount</ChartTitle>
    <Legend>
      <LegendTitle>ItemName</LegendTitle>
      {legend.map(([name, c], i) => <LegendItem key={i} $c={c}>{name}</LegendItem>)}
      <LegendNext aria-label="次へ" />
    </Legend>
    <PlotArea>
      <Categories>
        {chartData.map(([name]) => <Category key={name}>{name}</Category>)}
      </Categories>
      <GridLines>
        {[0, 1, 2, 3, 4].map((n) => <GridCell key={n} />)}
      </GridLines>
      <Bars>
        {chartData.map(([name, value, c]) => (
          <BarSlot key={name}><Bar $c={c} style={{ width: `${value * 2}%` }} /></BarSlot>
        ))}
      </Bars>
      <ScrollThumb />
      <Axis>
        {[0, 10, 20, 30, 40, 50].map((n) => <Tick key={n}>{n}</Tick>)}
      </Axis>
    </PlotArea>
  </Chart>
);

const ModelSlicer = () => (
  <SlicerColumn>
    <Slicer>
      <SlicerHead>
        <SlicerName>ItemModel</SlicerName>
        <Icon w={8} h={8}><path d="M4.500 1l3 2-3.500 4H2L.7 5zM2.500 3l3 2.500" stroke="#999" strokeWidth=".9" /></Icon>
        <Icon w={7} h={5}><path d="M.5.5l3 3 3-3" stroke="#888" /></Icon>
      </SlicerHead>
      <SlicerOptions>
        <SlicerItem><OpenBox type="checkbox" aria-label="空白" /></SlicerItem>
        <SlicerItem><OpenBox type="checkbox" />itemModel001</SlicerItem>
      </SlicerOptions>
      <Handle $x="l" $y="t" /><Handle $x="c" $y="t" /><Handle $x="r" $y="t" />
      <Handle $x="l" $y="m" /><Handle $x="r" $y="m" />
      <Handle $x="l" $y="b" /><Handle $x="c" $y="b" /><Handle $x="r" $y="b" />
    </Slicer>
    <SlicerTools>
      <Icon w={11} h={10}><path d="M6 .5H.5v9h10V5M1 5.500h4.500v4M6 5l4.500-4.500M7.500.5h3v3" stroke="#888" /></Icon>
      <Icon w={12} h={10}><path d="M0 5h2M5 5h2M10 5h2" stroke="#777" strokeWidth="2" /></Icon>
    </SlicerTools>
  </SlicerColumn>
);

const VisualPane = () => (
  <Pane $w={142}>
    <PaneHead $end={9}><PaneTitle>視覚化</PaneTitle><Chevron /></PaneHead>
    <VisualGrid>
      {visuals.map((v) => (
        <VisualButton key={v.name} aria-label={v.name} $on={v.name === "スライサー"}>
          <Icon s={13}>{v.art}</Icon>
        </VisualButton>
      ))}
    </VisualGrid>
    <FormatTabs>
      <FormatTab $on aria-label="フィールド">
        <Icon w={17} h={17}><path d="M1 1.500h15" stroke="#ddd" strokeDasharray="1 1" /><path d="M1.500 4.500h14v4h-14zM1.500 8.500h14v4h-14z" stroke="#ddd" /><path d="M1 15.500h15" stroke="#ddd" strokeDasharray="1 1" /></Icon>
      </FormatTab>
      <FormatTab aria-label="書式">
        <Icon w={16} h={17}><path d="M2.500 1.500h10v4h-10zM12.500 3.500h2v4h-7v3M6 10.500h3v6H6zM.5 3.500h2" stroke="#ddd" /></Icon>
      </FormatTab>
      <FormatTab aria-label="分析">
        <Icon w={17} h={17}><circle cx="7.500" cy="7.500" r="6" stroke="#ddd" strokeWidth="1.200" /><path d="M12 12l4.500 4.500" stroke="#ddd" strokeWidth="1.500" /><path d="M2.500 8l3-3 2.500 2.500 4-4M4.500 12V9M7.500 13V9.500M10.500 12V7.500" stroke="#ddd" /></Icon>
      </FormatTab>
    </FormatTabs>
    <Well>
      <WellLabel>フィールド</WellLabel>
      <FieldZone>
        <FieldChip>
          <ChipName>ItemModel</ChipName>
          <ChipCaret aria-label="メニュー" />
          <button aria-label="削除"><Icon s={9}><path d="M1.500 1.500l6 6M7.500 1.500l-6 6" stroke="#eee" strokeWidth="1.300" /></Icon></button>
        </FieldChip>
      </FieldZone>
    </Well>
    <SectionHead>フィルター</SectionHead>
    <FilterList>
      <WellLabel $indent={8}>ビジュアル レベル フィルター</WellLabel>
      <DropZone>ここにデータ フィールドをドラッグ...</DropZone>
      <WellLabel $indent={8}>ページ レベル フィルター</WellLabel>
      <DropZone>ここにデータ フィールドをドラッグ...</DropZone>
      <WellLabel $indent={8}>レポート レベル フィルター</WellLabel>
      <DropZone>ここにデータ フィールドをドラッグ...</DropZone>
    </FilterList>
    <SectionHead>ドリルスルー</SectionHead>
    <FilterList>
      <WellLabel $indent={4}>すべてのフィルターを保持する</WellLabel>
      <KeepFilters>オフ<Switch type="checkbox" role="switch" /></KeepFilters>
      <DropZone>ドリルスルーするフィールドをここ...</DropZone>
    </FilterList>
  </Pane>
);

const FieldsPane = () => (
  <Pane $w={133}>
    <PaneHead $end={3}><PaneTitle $kana>フィールド</PaneTitle><Chevron /></PaneHead>
    <SearchBox>
      <Icon s={13}><circle cx="8" cy="5" r="4" stroke="#ccc" strokeWidth="1.200" /><path d="M5 8L.5 12.500" stroke="#ccc" strokeWidth="1.200" /></Icon>
      <SearchInput type="search" placeholder="検索" />
    </SearchBox>
    <FieldList>
      {fields.map((f, i) => {
        const sum = f.startsWith("Σ");
        return (
          <FieldRow key={i}>
            <FieldCheck type="checkbox" defaultChecked={f === "ItemModel"} />
            <Sigma>{sum && "Σ"}</Sigma>
            {sum ? f.slice(1) : f}
          </FieldRow>
        );
      })}
    </FieldList>
  </Pane>
);

export default function App() {
  return (
    <>
      <GlobalStyle />
      <Shell>
        <TopBar />
        <RibbonTabs />
        <RibbonBar />
        <Workspace>
          <ViewRail>
            <ViewButton $on aria-label="レポート"><ReportView /></ViewButton>
            <ViewButton aria-label="データ"><DataView /></ViewButton>
            <ViewButton aria-label="モデル"><ModelView /></ViewButton>
          </ViewRail>
          <Center>
            <Page>
              <StockChart />
              <ModelSlicer />
            </Page>
            <PageTabs>
              <PageArrows>
                <Icon w={4} h={6}><path d="M4 0v6L0 3z" fill="#bbb" /></Icon>
                <Icon w={4} h={6}><path d="M0 0v6l4-3z" fill="#bbb" /></Icon>
              </PageArrows>
              <PageTab>ページ 1</PageTab>
              <AddPage aria-label="新しいページ"><Icon s={9}><path d="M4.500 0v9M0 4.500h9" stroke="#666" strokeWidth="2" /></Icon></AddPage>
            </PageTabs>
          </Center>
          <VisualPane />
          <FieldsPane />
        </Workspace>
        <StatusBar>
          <span>1/1 ページ</span>
          <UpdateLink href="#update">更新があります (クリックするとダウンロードします)</UpdateLink>
        </StatusBar>
      </Shell>
    </>
  );
}
